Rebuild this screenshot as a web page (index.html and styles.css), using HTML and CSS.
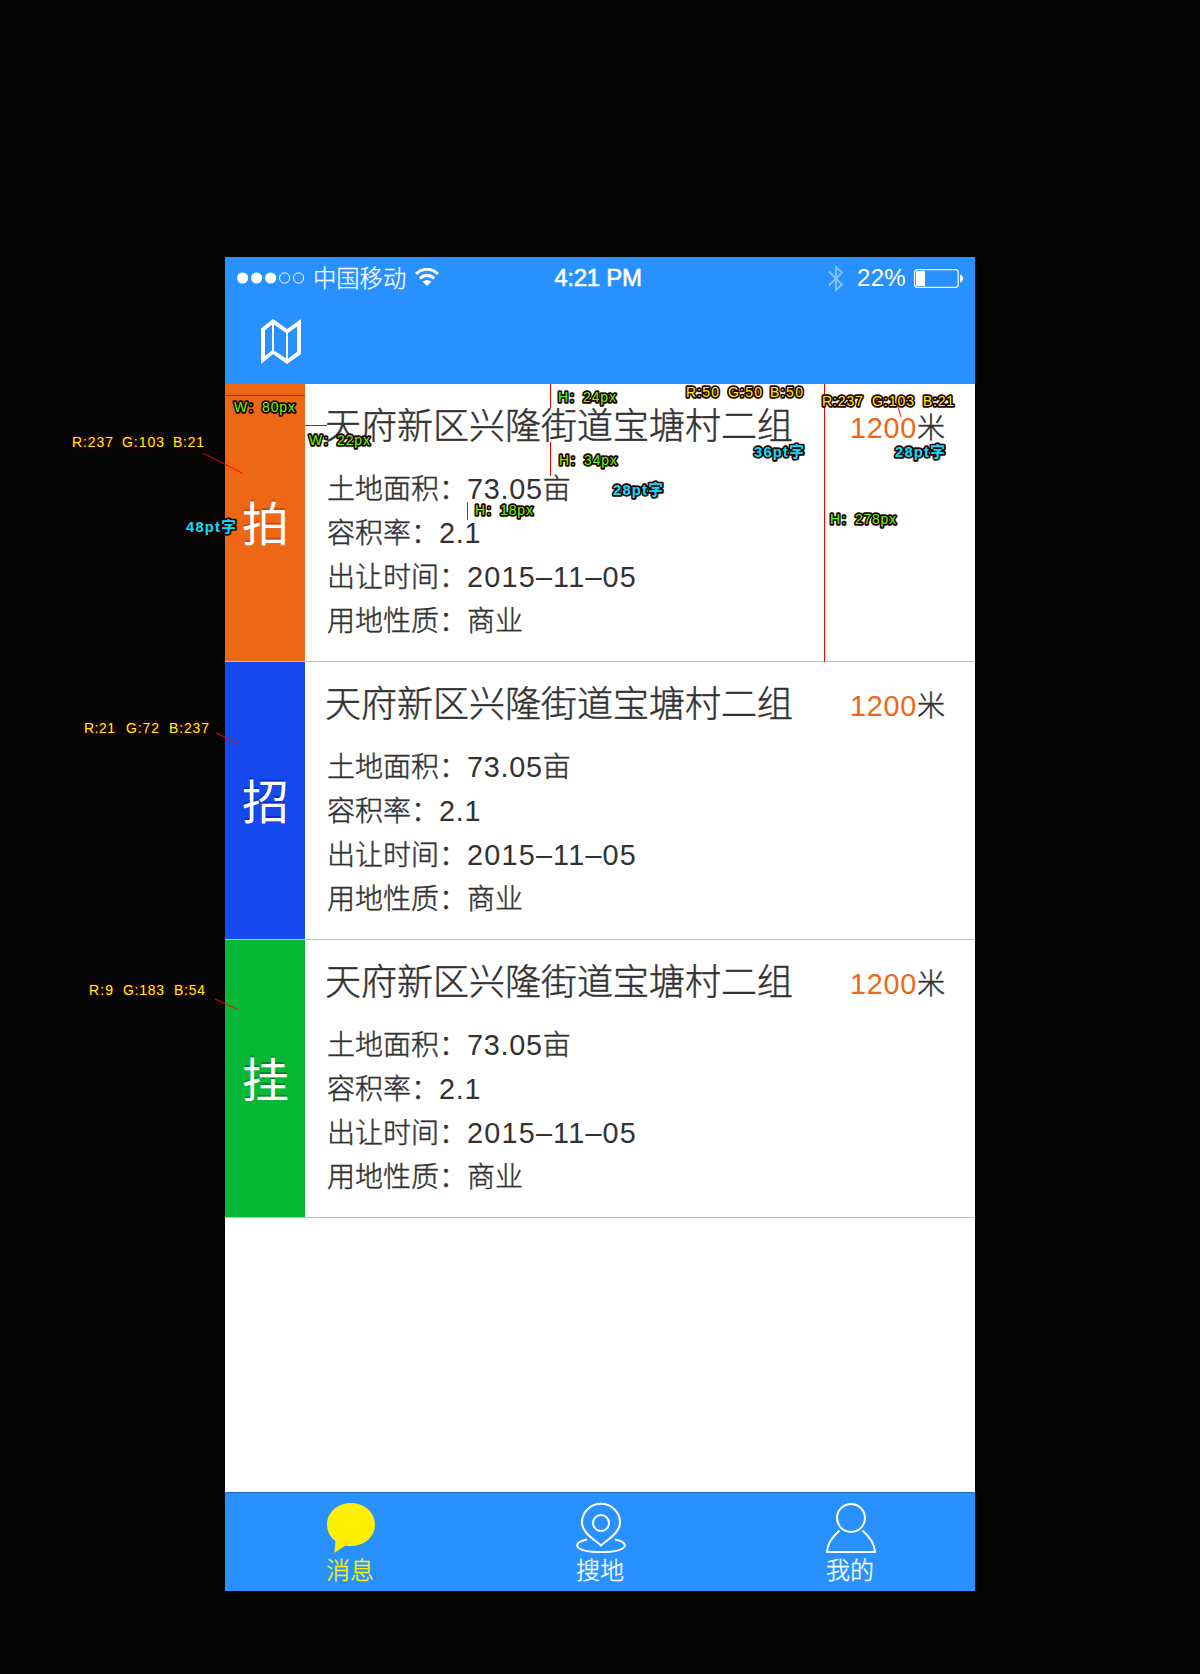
FILE: index.html
```html
<!DOCTYPE html>
<html lang="zh-CN">
<head>
<meta charset="utf-8">
<title>土地列表</title>
<link rel="stylesheet" href="styles.css">
</head>
<body>
<main class="phone">
  <header class="header">
    <div class="status">
      <div class="status-left">
        <svg class="dots" width="68" height="12" viewBox="0 0 68 12"><g fill="#fff"><circle cx="5.6" cy="6" r="5.6"/><circle cx="19.6" cy="6" r="5.6"/><circle cx="33.6" cy="6" r="5.6"/></g><g fill="none" stroke="#fff"><circle cx="47.6" cy="6" r="5.1"/><circle cx="61.6" cy="6" r="5.1"/></g></svg>
        <span class="carrier">中国移动</span>
        <svg class="wifi" width="24" height="18" viewBox="0 0 24 18"><g fill="none" stroke="#fff" stroke-width="3"><path d="M1 5.8Q12-3.2 23 5.8"/><path d="M4.7 10.400Q12 4.400 19.3 10.400"/></g><path d="M7.500 13.6Q12 10.4 16.500 13.6L12 18z" fill="#fff"/></svg>
      </div>
      <span class="time">4:21 PM</span>
      <div class="status-right">
        <svg class="bt" width="16" height="27" viewBox="0 0 16 27"><path d="M1 6.5L14 19.5L8 25V2L14 7.5L1 20.5" fill="none" stroke="#fff" stroke-width="1.8" opacity=".45"/></svg>
        <span class="percent">22%</span>
        <svg class="battery" width="49" height="19" viewBox="0 0 49 19"><rect x=".6" y=".6" width="43.6" height="17.8" rx="2.6" fill="none" stroke="#fff" stroke-width="1.1"/><rect x="2" y="2" width="9" height="15" rx="1" fill="#fff"/><path d="M46 5.5Q49 6.5 49 9.5Q49 12.500 46 13.500z" fill="#fff"/></svg>
      </div>
    </div>
    <div class="nav">
      <svg width="40" height="46" viewBox="0 0 40 46"><path fill="#fff" fill-rule="evenodd" d="M0 9.600L12 0L26 10L40 0V35L26 45L12 35L0 45zM4 11.300V37L11 31.500V5.600zM13 5.600V31.500L25 39.500V14zM27 14V39.500L36 33V7.600z"/></svg>
    </div>
  </header>

  <section class="list">
    <article class="item">
      <div class="tag tag-orange">拍</div>
      <div class="body">
        <div class="head"><h2>天府新区兴隆街道宝塘村二组</h2><p class="distance"><b class="num">1200</b>米</p></div>
        <ul><li>土地面积：<span class="num">73.05</span>亩</li><li>容积率：<span class="num">2.1</span></li><li>出让时间：<span class="num date">2015–11–05</span></li><li>用地性质：商业</li></ul>
      </div>
    </article>
    <article class="item">
      <div class="tag tag-blue">招</div>
      <div class="body">
        <div class="head"><h2>天府新区兴隆街道宝塘村二组</h2><p class="distance"><b class="num">1200</b>米</p></div>
        <ul><li>土地面积：<span class="num">73.05</span>亩</li><li>容积率：<span class="num">2.1</span></li><li>出让时间：<span class="num date">2015–11–05</span></li><li>用地性质：商业</li></ul>
      </div>
    </article>
    <article class="item">
      <div class="tag tag-green">挂</div>
      <div class="body">
        <div class="head"><h2>天府新区兴隆街道宝塘村二组</h2><p class="distance"><b class="num">1200</b>米</p></div>
        <ul><li>土地面积：<span class="num">73.05</span>亩</li><li>容积率：<span class="num">2.1</span></li><li>出让时间：<span class="num date">2015–11–05</span></li><li>用地性质：商业</li></ul>
      </div>
    </article>
  </section>

  <nav class="tabs">
    <a class="tab active"><svg width="50" height="52" viewBox="0 0 50 52"><path fill="#fff000" d="M25 1C38.500 1 49 10.500 49 22.500S38.500 44 25 44Q22 44 19.500 43.500L8.300 51L9.500 39Q1 33 1 22.500C1 10.500 11.500 1 25 1z"/></svg><span>消息</span></a>
    <a class="tab"><svg width="50" height="52" viewBox="0 0 50 52"><g fill="none" stroke="#fff" stroke-width="2"><path d="M25 43.500C19 38 6 31 6 20.500A19 18.800 0 0 1 44 20.500C44 31 31 38 25 43.500z"/><circle cx="25" cy="21" r="8"/><path d="M11 37.500C-4 40 -3.500 50 25 50S54 40 39 37.500"/></g></svg><span>搜地</span></a>
    <a class="tab"><svg width="50" height="52" viewBox="0 0 50 52"><g fill="none" stroke="#fff" stroke-width="2"><circle cx="25" cy="16" r="14"/><path d="M13.500 28.500Q1.500 39 1 50H49Q48.500 39 36.500 28.500"/></g></svg><span>我的</span></a>
  </nav>
</main>

<svg class="notes" width="1200" height="1674" viewBox="0 0 1200 1674">
  <g class="lines">
    <path d="M225 395.500H305M305 425.500H327M550.500 384V408M550.500 442V476M467.500 502V520M824.500 384V662"/>
    <path d="M898 407L901 417M203 453L243 473.500M216 733L238 743.500M215 999L237 1009"/>
  </g>
  <g class="size">
    <text x="234" y="412">W</text><text x="249" y="412">:</text><text x="262" y="412" textLength="33">80px</text>
    <text x="309" y="445">W</text><text x="324" y="445">:</text><text x="337" y="445" textLength="33">22px</text>
    <text x="558" y="402">H</text><text x="570" y="402">:</text><text x="583" y="402" textLength="33">24px</text>
    <text x="559" y="465">H</text><text x="571" y="465">:</text><text x="584" y="465" textLength="33">34px</text>
    <text x="475" y="515">H</text><text x="487" y="515">:</text><text x="500" y="515" textLength="33">18px</text>
    <text x="830" y="524">H</text><text x="842" y="524">:</text><text x="855" y="524" textLength="41">278px</text>
  </g>
  <g class="rgb">
    <text x="686" y="397" textLength="33">R:50</text><text x="728" y="397" textLength="34">G:50</text><text x="770" y="397" textLength="33">B:50</text>
    <text x="822" y="406" textLength="41">R:237</text><text x="872" y="406" textLength="42">G:103</text><text x="923" y="406" textLength="31">B:21</text>
    <text x="72" y="447" textLength="41">R:237</text><text x="122" y="447" textLength="42">G:103</text><text x="173" y="447" textLength="31">B:21</text>
    <text x="84" y="733" textLength="31">R:21</text><text x="126" y="733" textLength="33">G:72</text><text x="169" y="733" textLength="40">B:237</text>
    <text x="89" y="995" textLength="24">R:9</text><text x="123" y="995" textLength="41">G:183</text><text x="174" y="995" textLength="31">B:54</text>
  </g>
  <g class="type">
    <text x="613" y="495" textLength="50">28pt字</text>
    <text x="754" y="457" textLength="50">36pt字</text>
    <text x="895" y="457" textLength="50">28pt字</text>
    <text x="186" y="532" textLength="50">48pt字</text>
  </g>
</svg>
</body>
</html>
```
FILE: styles.css
```css
* { box-sizing: border-box; margin: 0; padding: 0; }
body {
  position: relative;
  width: 1200px;
  height: 1674px;
  padding: 257px 225px 83px;
  overflow: hidden;
  background: #050505;
  color: #323232;
  font-family: "Noto Sans CJK SC", sans-serif;
  font-weight: 300;
}
svg { display: block; flex: none; }
.phone { display: flex; flex-direction: column; width: 750px; height: 1334px; background: #fff; }
.header { height: 127px; background: #2891ff; color: #fff; }
.status { display: grid; grid-template-columns: 1fr auto 1fr; align-items: center; height: 40px; padding: 0 12px; white-space: nowrap; }
.status-left, .status-right { display: flex; align-items: center; }
.status-right { justify-content: flex-end; }
.carrier { margin: 0 0 2px 8px; font-size: 23.3px; line-height: 38px; -webkit-text-stroke: .25px; }
.wifi { margin: 0 0 3px 9px; }
.time { margin-right: 4px; font: 24px/42px "Liberation Sans", sans-serif; letter-spacing: -.25px; -webkit-text-stroke: .6px #fff; }
.bt { margin-right: 13px; }
.percent { margin-right: 8px; font: 24px/42px "Liberation Sans", sans-serif; letter-spacing: .3px; }
.nav { padding: 22px 0 0 36px; }
.list { flex: 1; }
.item { display: flex; height: 278px; border-bottom: 1px solid #bebebe; }
.tag { display: flex; align-items: center; justify-content: center; width: 80px; height: 277px; padding: 0 0 4px 1px; color: #fff; font-size: 47px; font-weight: 400; line-height: 60px; text-shadow: 0 -2px 0 rgba(130, 0, 0, .3); }
.tag-orange { background: #ed6715; }
.tag-blue { background: #1548ed; text-shadow: 0 -2px 0 rgba(0, 0, 160, .4); }
.tag-green { background: #09b736; text-shadow: 0 -2px 0 rgba(0, 70, 0, .4); }
.body { flex: 1; padding: 13px 30px 0 20px; -webkit-text-stroke: .45px #323232; }
.head { display: flex; justify-content: space-between; }
h2 { font-size: 36px; font-weight: 300; line-height: 52px; white-space: nowrap; }
.distance { height: 52px; padding-top: 6px; font-size: 28px; line-height: 46px; white-space: nowrap; }
.distance b { color: #ed6715; font-weight: 300; }
.num { font-family: "Liberation Sans", sans-serif; font-size: 28.8px; line-height: 1; letter-spacing: .75px; -webkit-text-stroke: 0; }
.date { letter-spacing: 1.2px; }
ul { padding: 16px 0 0 2px; list-style: none; font-size: 28px; line-height: 44px; white-space: nowrap; }
li { height: 44px; }
.tabs { display: grid; grid-template-columns: repeat(3, 1fr); height: 99px; border-top: 1px solid #1c69bb; background: #2891ff; color: #fff; }
.tab { display: flex; flex-direction: column; align-items: center; padding-top: 9px; font-size: 24px; line-height: 30px; -webkit-text-stroke: .3px #fff; }
.tab svg { margin-left: 2px; }
.tab.active { color: #fff000; -webkit-text-stroke-color: #fff000; }
.notes { position: absolute; left: 0; top: 0; }
.notes text { paint-order: stroke; stroke: #240000; stroke-width: 3.4px; stroke-linejoin: round; }
.lines { fill: none; stroke: #f00; }
.size, .rgb { font: 14px "Liberation Sans", sans-serif; }
.size { fill: #5cff00; }
.rgb { fill: #fff500; }
.type { font: 700 14.8px "Liberation Sans", "Noto Sans CJK SC", sans-serif; fill: #00e1ff; }
```
